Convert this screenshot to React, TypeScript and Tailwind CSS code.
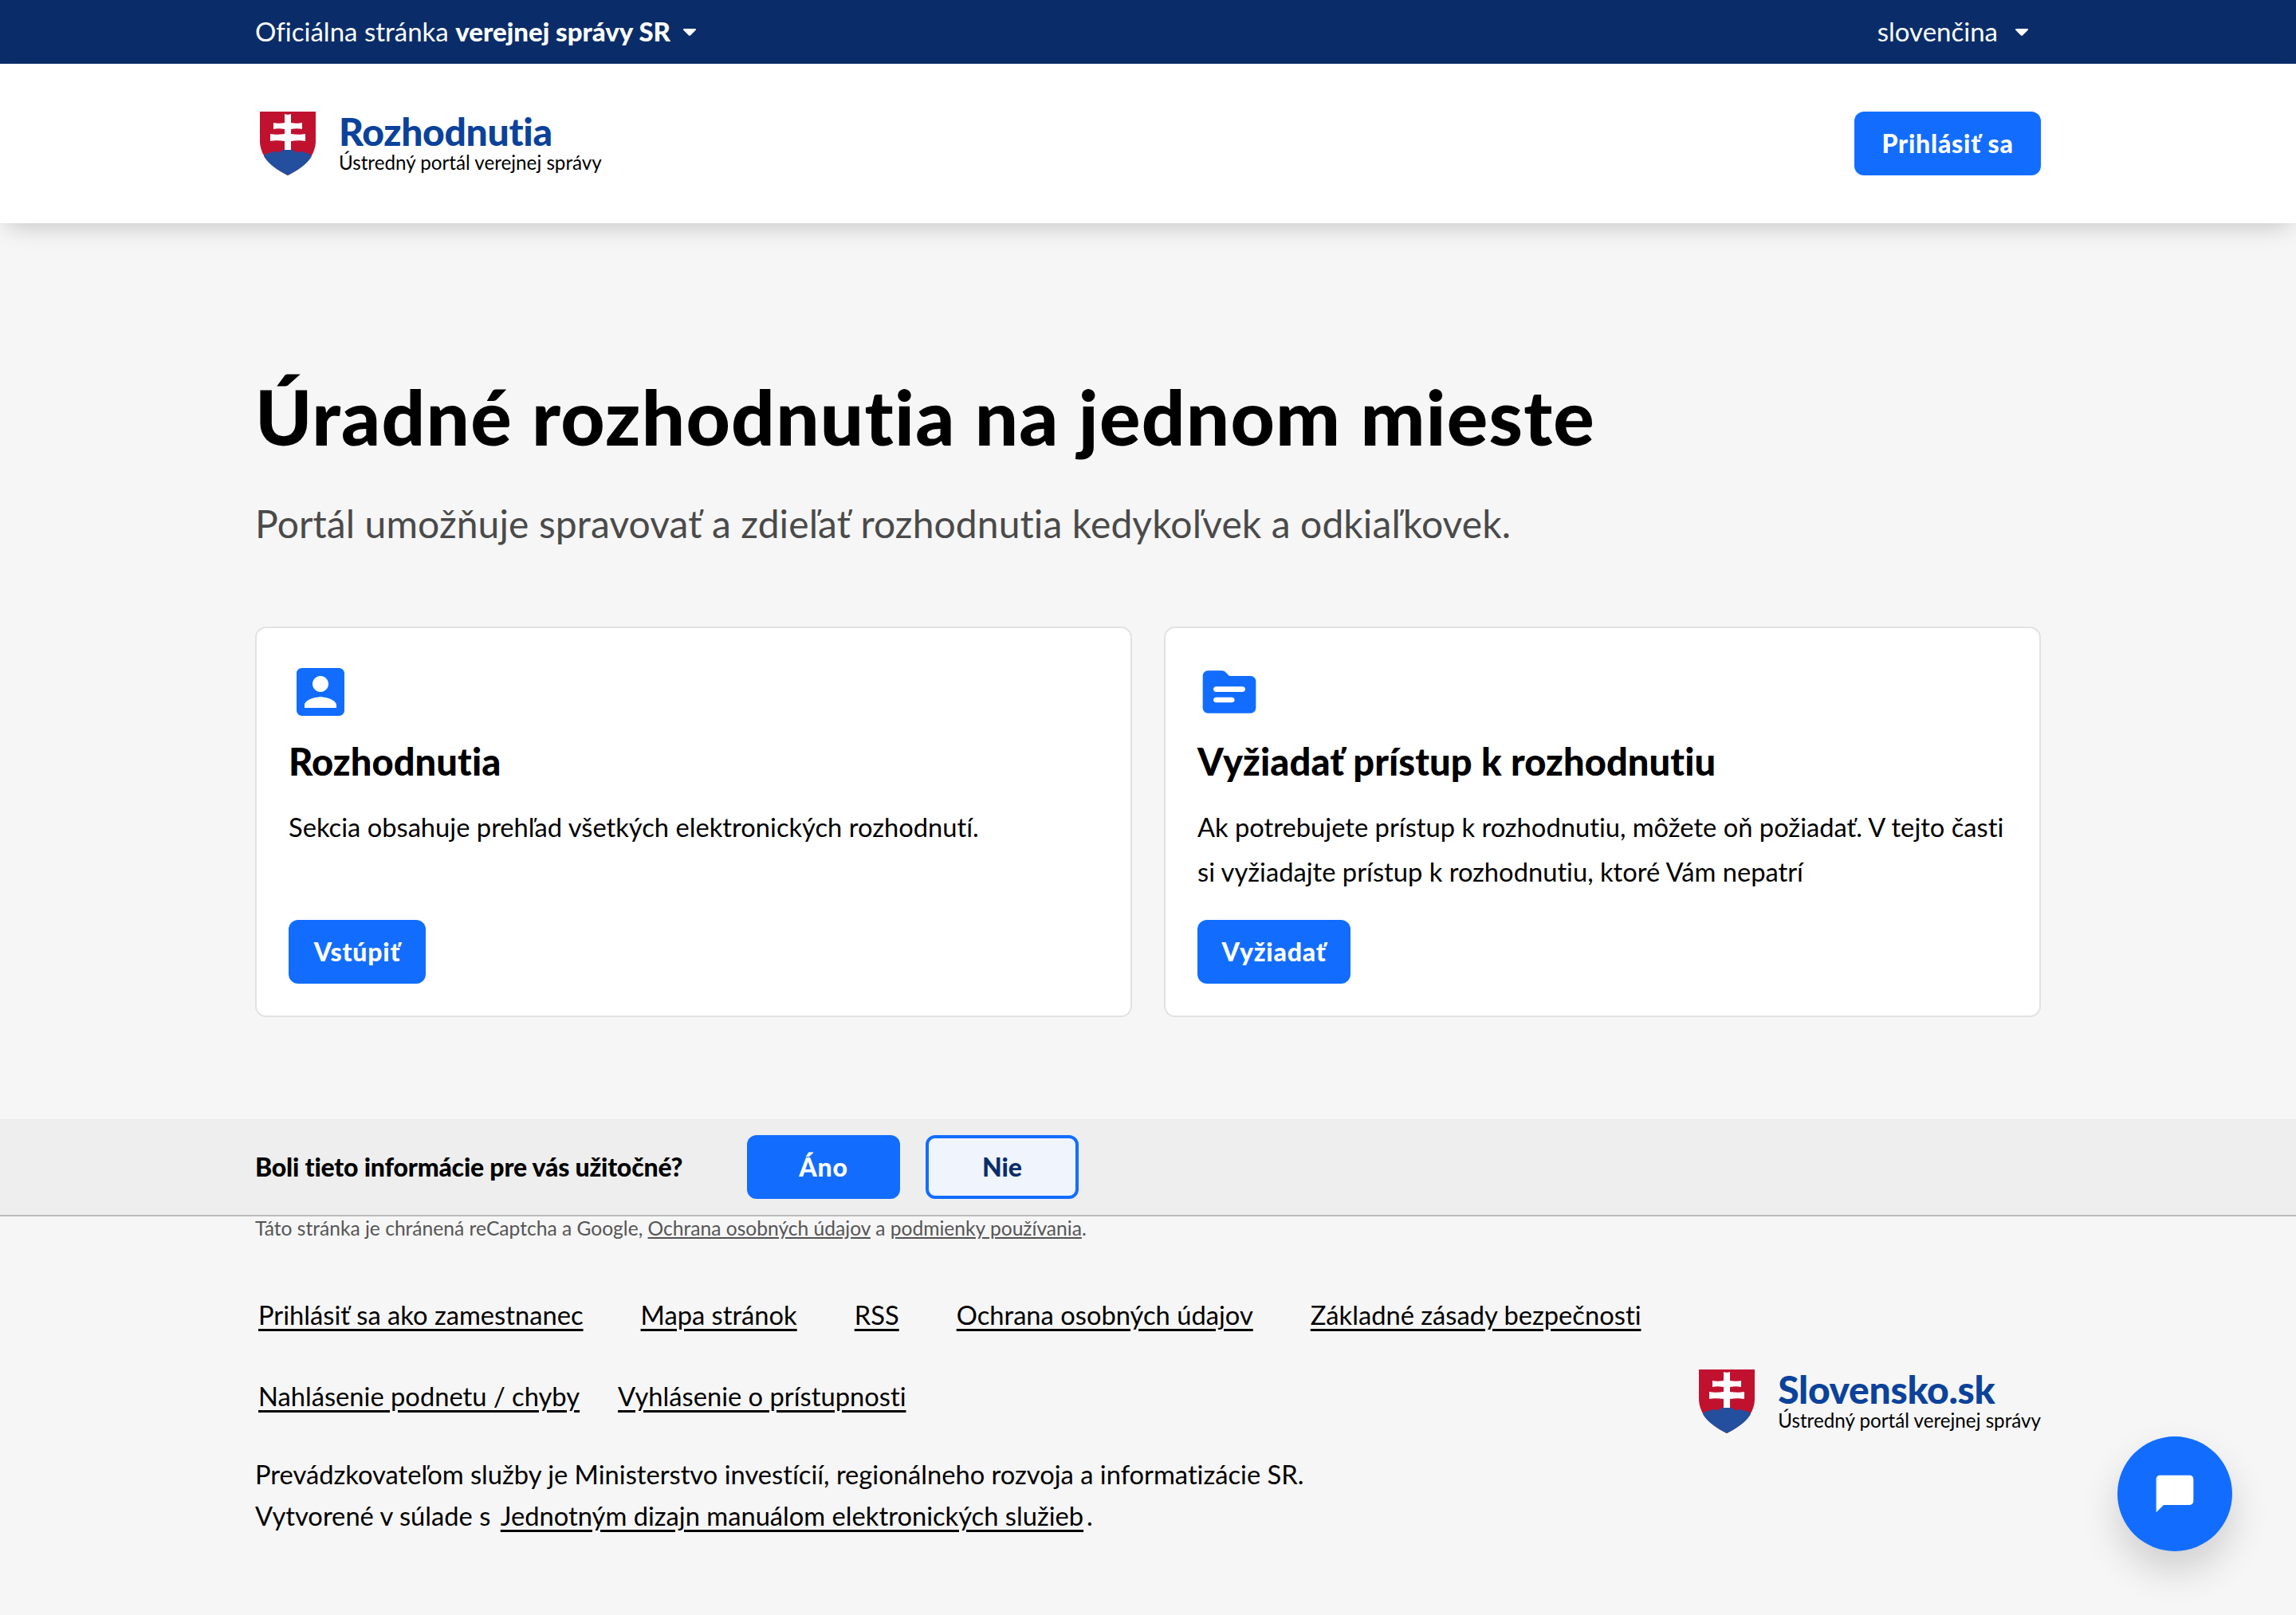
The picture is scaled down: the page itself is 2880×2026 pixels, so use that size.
const LATO = "font-['Lato','Noto_Sans',sans-serif] [font-variant-ligatures:none]";

function Shield() {
  return (
    <svg viewBox="0 0 72 80" className="h-[80px] w-[72px] shrink-0">
      <path d="M1 0H71V34C72 56 56 70 36 80 16 70 0 56 1 34Z" fill="#c0122f" />
      <path
        d="M36 80C22 73 11 65 6 56 8 53 11 51 15 52 18 49 23 50 25 52 27 49 31 47 36 47 41 47 45 49 47 52 49 50 54 49 57 52 61 51 64 53 66 56 61 65 50 73 36 80Z"
        fill="#234f9e"
      />
      <path
        d="M32 3C34 4 38 4 40 3V14C45 15 50 15 54 14V22C50 21 45 21 40 22V28C46 29 53 29 58 28V37C53 36 46 36 40 37V48H32V37C26 36 19 36 14 37V28C19 29 26 29 32 28V22C27 21 22 21 18 22V14C22 15 27 15 32 14Z"
        fill="#fff"
      />
    </svg>
  );
}

function Caret() {
  return (
    <svg viewBox="0 0 16 9" className="h-[9px] w-[16px] shrink-0" fill="#fff">
      <path d="M1 0H15C16 0 16.400 1 15.700 1.800L9 8.400C8.400 9 7.600 9 7 8.400L.3 1.800C-.4 1 0 0 1 0Z" />
    </svg>
  );
}

function Logo({ title }: { title: string }) {
  return (
    <div className="flex items-center gap-[28px]">
      <Shield />
      <div>
        <div className="text-[48px] leading-[46px] font-black tracking-[-0.3px] text-[#0b429b]">{title}</div>
        <div className="mt-[2px] text-[24.200px] leading-[28px] text-black">Ústredný portál verejnej správy</div>
      </div>
    </div>
  );
}

function BlueButton({ label, width }: { label: string; width: string }) {
  return (
    <button className={`h-[80px] rounded-[12px] bg-[#126dff] text-[32px] font-black tracking-[0.8px] text-white ${width}`}>
      {label}
    </button>
  );
}

function Card({
  icon,
  title,
  text,
  button,
  buttonWidth,
}: {
  icon: React.ReactNode;
  title: string;
  text: React.ReactNode;
  button: string;
  buttonWidth: string;
}) {
  return (
    <article className="h-[490px] rounded-[14px] border-2 border-[#e2e2e2] bg-white px-[40px] pt-[40px]">
      {icon}
      <h2 className="mt-[17px] text-[47px] leading-[60px] font-black tracking-[0.1px] text-black">{title}</h2>
      <p className="mt-[25px] h-[112px] text-[32.700px] leading-[56px] whitespace-nowrap text-black">{text}</p>
      <div className="mt-[32px]">
        <BlueButton label={button} width={buttonWidth} />
      </div>
    </article>
  );
}

function FooterLink({ children }: { children: React.ReactNode }) {
  return (
    <a href="#" className="underline underline-offset-[5px]">
      {children}
    </a>
  );
}

export default function App() {
  return (
    <div className={`relative min-h-[2026px] bg-[#f6f6f6] ${LATO}`}>
      <div className="flex h-[80px] items-center justify-between bg-[#0a2d69] px-[320px] text-[33px] text-white">
        <div className="flex items-center gap-[16px]">
          <span>
            Oficiálna stránka <b className="font-black">verejnej správy SR</b>
          </span>
          <Caret />
        </div>
        <div className="flex items-center gap-[22px] pr-[16px]">
          <span>slovenčina</span>
          <Caret />
        </div>
      </div>

      <header className="flex h-[200px] items-center justify-between bg-white px-[320px] shadow-[0_12px_28px_-8px_rgba(0,0,0,0.2)]">
        <div className="pl-[5px]">
          <Logo title="Rozhodnutia" />
        </div>
        <BlueButton label="Prihlásiť sa" width="w-[234px]" />
      </header>

      <main className="px-[320px] pt-[171px]">
        <h1 className="text-[96px] leading-[142px] font-black tracking-[1.250px] text-black">
          Úradné rozhodnutia na jednom mieste
        </h1>
        <p className="mt-[32px] text-[48px] leading-[64px] tracking-[0.1px] text-[#4a4a4a]">
          Portál umožňuje spravovať a zdieľať rozhodnutia kedykoľvek a odkiaľkovek.
        </p>

        <div className="mt-[97px] grid grid-cols-2 gap-[40px]">
          <Card
            icon={
              <svg viewBox="0 0 24 24" className="h-[80px] w-[80px]" fill="#126dff">
                <path d="M3 5v14c0 1.100.89 2 2 2h14c1.100 0 2-.9 2-2V5c0-1.100-.9-2-2-2H5c-1.110 0-2 .9-2 2zm12 4c0 1.660-1.340 3-3 3s-3-1.340-3-3 1.340-3 3-3 3 1.340 3 3zm-9 8c0-2 4-3.100 6-3.100s6 1.100 6 3.100v1H6v-1z" />
              </svg>
            }
            title="Rozhodnutia"
            text="Sekcia obsahuje prehľad všetkých elektronických rozhodnutí."
            button="Vstúpiť"
            buttonWidth="w-[172px]"
          />
          <Card
            icon={
              <svg viewBox="0 0 24 24" className="h-[80px] w-[80px]" fill="#126dff">
                <path
                  fillRule="evenodd"
                  d="M20 6h-8l-1.410-1.410C10.210 4.210 9.700 4 9.170 4H4c-1.100 0-1.990.9-1.990 2L2 18c0 1.100.9 2 2 2h16c1.100 0 2-.9 2-2V8c0-1.100-.9-2-2-2zM7 14h6c.55 0 1 .45 1 1s-.45 1-1 1H7c-.55 0-1-.45-1-1s.45-1 1-1zm0-4h10c.55 0 1 .45 1 1s-.45 1-1 1H7c-.55 0-1-.45-1-1s.45-1 1-1z"
                />
              </svg>
            }
            title="Vyžiadať prístup k rozhodnutiu"
            text={
              <>
                Ak potrebujete prístup k rozhodnutiu, môžete oň požiadať. V tejto časti
                <br />
                si vyžiadajte prístup k rozhodnutiu, ktoré Vám nepatrí
              </>
            }
            button="Vyžiadať"
            buttonWidth="w-[192px]"
          />
        </div>
      </main>

      <section className="mt-[128px] flex h-[122px] items-start border-b-2 border-[#bbbbbb] bg-[#eeeeee] px-[320px] pt-[20px]">
        <div className="flex h-[80px] w-[617px] items-center text-[32px] font-black tracking-[-0.2px] text-black">
          Boli tieto informácie pre vás užitočné?
        </div>
        <BlueButton label="Áno" width="w-[192px]" />
        <button className="ml-[32px] h-[80px] w-[192px] rounded-[12px] border-4 border-[#126dff] bg-[#eff4fd] text-[32px] font-black text-[#0a2d69]">
          Nie
        </button>
      </section>

      <footer className="px-[320px] text-black">
        <p className="text-[24.600px] leading-[30px] text-[#555555]">
          Táto stránka je chránená reCaptcha a Google, <a href="#" className="underline">Ochrana osobných údajov</a> a{" "}
          <a href="#" className="underline">podmienky používania</a>.
        </p>

        <div className="flex items-start justify-between">
          <div className="text-[32.700px] leading-[40px]">
            <div className="mt-[74px] flex gap-[72px] pl-[4px]">
              <FooterLink>Prihlásiť sa ako zamestnanec</FooterLink>
              <FooterLink>Mapa stránok</FooterLink>
              <FooterLink>RSS</FooterLink>
              <FooterLink>Ochrana osobných údajov</FooterLink>
              <FooterLink>Základné zásady bezpečnosti</FooterLink>
            </div>
            <div className="mt-[62px] flex gap-[48px] pl-[4px]">
              <FooterLink>Nahlásenie podnetu / chyby</FooterLink>
              <FooterLink>Vyhlásenie o prístupnosti</FooterLink>
            </div>
            <p className="mt-[52px] leading-[52px]">
              Prevádzkovateľom služby je Ministerstvo investícií, regionálneho rozvoja a informatizácie SR.
              <br />
              Vytvorené v súlade s{" "}
              <span className="ml-[4px]">
                <FooterLink>Jednotným dizajn manuálom elektronických služieb</FooterLink>
              </span>
              <span className="ml-[4px]">.</span>
            </p>
          </div>
          <div className="mt-[162px]">
            <Logo title="Slovensko.sk" />
          </div>
        </div>
      </footer>

      <button className="absolute top-[1802px] left-[2656px] flex h-[144px] w-[144px] items-center justify-center rounded-full bg-[#126dff] shadow-[0_24px_48px_rgba(0,0,0,0.16)]">
        <svg viewBox="0 0 24 24" className="h-[56px] w-[56px]" fill="#fff">
          <path d="M20 2H4c-1.100 0-2 .9-2 2v18l4-4h14c1.100 0 2-.9 2-2V4c0-1.100-.9-2-2-2z" />
        </svg>
      </button>
    </div>
  );
}
